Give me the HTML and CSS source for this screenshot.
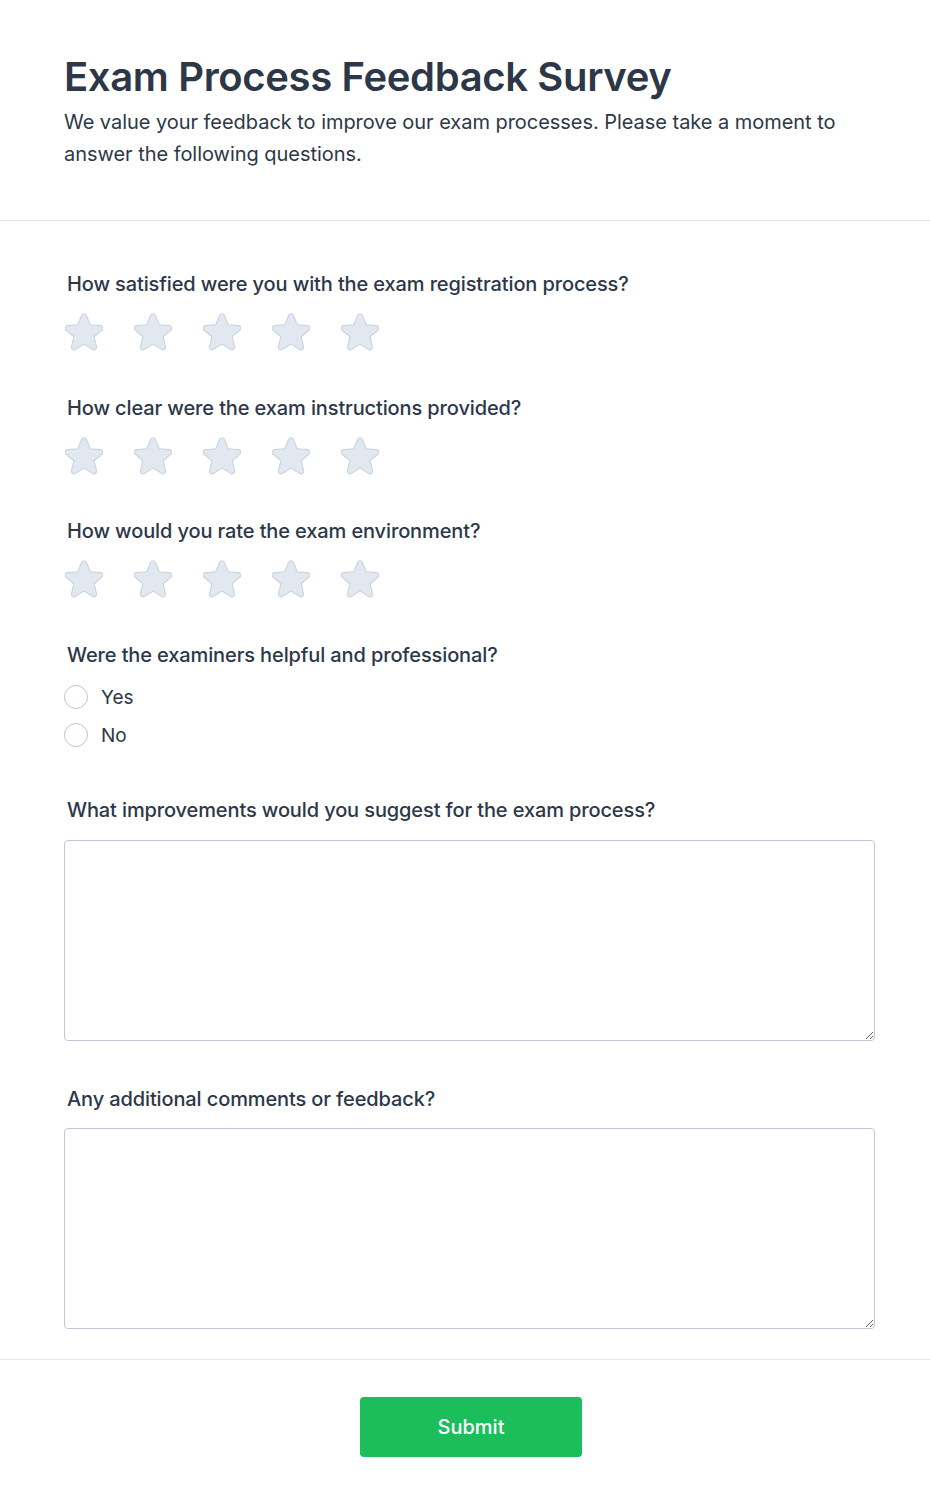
FILE: index.html
```html
<!DOCTYPE html>
<html lang="en">
<head>
<meta charset="utf-8">
<title>Exam Process Feedback Survey</title>
<link rel="stylesheet" href="styles.css">
</head>
<body>
<header class="header">
  <h1 class="title">Exam Process Feedback Survey</h1>
  <p class="intro">We value your feedback to improve our exam processes. Please take a moment to answer the following questions.</p>
</header>
<form class="form">
  <div class="question">
    <label class="label">How satisfied were you with the exam registration process?</label>
    <div class="stars">
      <svg class="star" viewBox="2 2 20 20"><path d="M10.788 3.21c.448-1.077 1.976-1.077 2.424 0l2.082 5.006 5.404.434c1.164.093 1.636 1.545.749 2.305l-4.117 3.527 1.257 5.273c.271 1.136-.964 2.033-1.96 1.425L12 18.354 7.373 21.18c-.996.608-2.231-.29-1.96-1.425l1.257-5.273-4.117-3.527c-.887-.76-.415-2.212.749-2.305l5.404-.434 2.082-5.005Z"/></svg>
      <svg class="star" viewBox="2 2 20 20"><path d="M10.788 3.21c.448-1.077 1.976-1.077 2.424 0l2.082 5.006 5.404.434c1.164.093 1.636 1.545.749 2.305l-4.117 3.527 1.257 5.273c.271 1.136-.964 2.033-1.96 1.425L12 18.354 7.373 21.18c-.996.608-2.231-.29-1.96-1.425l1.257-5.273-4.117-3.527c-.887-.76-.415-2.212.749-2.305l5.404-.434 2.082-5.005Z"/></svg>
      <svg class="star" viewBox="2 2 20 20"><path d="M10.788 3.21c.448-1.077 1.976-1.077 2.424 0l2.082 5.006 5.404.434c1.164.093 1.636 1.545.749 2.305l-4.117 3.527 1.257 5.273c.271 1.136-.964 2.033-1.96 1.425L12 18.354 7.373 21.18c-.996.608-2.231-.29-1.96-1.425l1.257-5.273-4.117-3.527c-.887-.76-.415-2.212.749-2.305l5.404-.434 2.082-5.005Z"/></svg>
      <svg class="star" viewBox="2 2 20 20"><path d="M10.788 3.21c.448-1.077 1.976-1.077 2.424 0l2.082 5.006 5.404.434c1.164.093 1.636 1.545.749 2.305l-4.117 3.527 1.257 5.273c.271 1.136-.964 2.033-1.96 1.425L12 18.354 7.373 21.18c-.996.608-2.231-.29-1.96-1.425l1.257-5.273-4.117-3.527c-.887-.76-.415-2.212.749-2.305l5.404-.434 2.082-5.005Z"/></svg>
      <svg class="star" viewBox="2 2 20 20"><path d="M10.788 3.21c.448-1.077 1.976-1.077 2.424 0l2.082 5.006 5.404.434c1.164.093 1.636 1.545.749 2.305l-4.117 3.527 1.257 5.273c.271 1.136-.964 2.033-1.96 1.425L12 18.354 7.373 21.18c-.996.608-2.231-.29-1.96-1.425l1.257-5.273-4.117-3.527c-.887-.76-.415-2.212.749-2.305l5.404-.434 2.082-5.005Z"/></svg>
    </div>
  </div>
  <div class="question">
    <label class="label">How clear were the exam instructions provided?</label>
    <div class="stars">
      <svg class="star" viewBox="2 2 20 20"><path d="M10.788 3.21c.448-1.077 1.976-1.077 2.424 0l2.082 5.006 5.404.434c1.164.093 1.636 1.545.749 2.305l-4.117 3.527 1.257 5.273c.271 1.136-.964 2.033-1.96 1.425L12 18.354 7.373 21.18c-.996.608-2.231-.29-1.96-1.425l1.257-5.273-4.117-3.527c-.887-.76-.415-2.212.749-2.305l5.404-.434 2.082-5.005Z"/></svg>
      <svg class="star" viewBox="2 2 20 20"><path d="M10.788 3.21c.448-1.077 1.976-1.077 2.424 0l2.082 5.006 5.404.434c1.164.093 1.636 1.545.749 2.305l-4.117 3.527 1.257 5.273c.271 1.136-.964 2.033-1.96 1.425L12 18.354 7.373 21.18c-.996.608-2.231-.29-1.96-1.425l1.257-5.273-4.117-3.527c-.887-.76-.415-2.212.749-2.305l5.404-.434 2.082-5.005Z"/></svg>
      <svg class="star" viewBox="2 2 20 20"><path d="M10.788 3.21c.448-1.077 1.976-1.077 2.424 0l2.082 5.006 5.404.434c1.164.093 1.636 1.545.749 2.305l-4.117 3.527 1.257 5.273c.271 1.136-.964 2.033-1.96 1.425L12 18.354 7.373 21.18c-.996.608-2.231-.29-1.96-1.425l1.257-5.273-4.117-3.527c-.887-.76-.415-2.212.749-2.305l5.404-.434 2.082-5.005Z"/></svg>
      <svg class="star" viewBox="2 2 20 20"><path d="M10.788 3.21c.448-1.077 1.976-1.077 2.424 0l2.082 5.006 5.404.434c1.164.093 1.636 1.545.749 2.305l-4.117 3.527 1.257 5.273c.271 1.136-.964 2.033-1.96 1.425L12 18.354 7.373 21.18c-.996.608-2.231-.29-1.96-1.425l1.257-5.273-4.117-3.527c-.887-.76-.415-2.212.749-2.305l5.404-.434 2.082-5.005Z"/></svg>
      <svg class="star" viewBox="2 2 20 20"><path d="M10.788 3.21c.448-1.077 1.976-1.077 2.424 0l2.082 5.006 5.404.434c1.164.093 1.636 1.545.749 2.305l-4.117 3.527 1.257 5.273c.271 1.136-.964 2.033-1.96 1.425L12 18.354 7.373 21.18c-.996.608-2.231-.29-1.96-1.425l1.257-5.273-4.117-3.527c-.887-.76-.415-2.212.749-2.305l5.404-.434 2.082-5.005Z"/></svg>
    </div>
  </div>
  <div class="question">
    <label class="label">How would you rate the exam environment?</label>
    <div class="stars">
      <svg class="star" viewBox="2 2 20 20"><path d="M10.788 3.21c.448-1.077 1.976-1.077 2.424 0l2.082 5.006 5.404.434c1.164.093 1.636 1.545.749 2.305l-4.117 3.527 1.257 5.273c.271 1.136-.964 2.033-1.960 1.425L12 18.354 7.373 21.18c-.996.608-2.231-.29-1.96-1.425l1.257-5.273-4.117-3.527c-.887-.76-.415-2.212.749-2.305l5.404-.434 2.082-5.005Z"/></svg>
      <svg class="star" viewBox="2 2 20 20"><path d="M10.788 3.21c.448-1.077 1.976-1.077 2.424 0l2.082 5.006 5.404.434c1.164.093 1.636 1.545.749 2.305l-4.117 3.527 1.257 5.273c.271 1.136-.964 2.033-1.96 1.425L12 18.354 7.373 21.18c-.996.608-2.231-.29-1.96-1.425l1.257-5.273-4.117-3.527c-.887-.76-.415-2.212.749-2.305l5.404-.434 2.082-5.005Z"/></svg>
      <svg class="star" viewBox="2 2 20 20"><path d="M10.788 3.21c.448-1.077 1.976-1.077 2.424 0l2.082 5.006 5.404.434c1.164.093 1.636 1.545.749 2.305l-4.117 3.527 1.257 5.273c.271 1.136-.964 2.033-1.96 1.425L12 18.354 7.373 21.18c-.996.608-2.231-.29-1.96-1.425l1.257-5.273-4.117-3.527c-.887-.76-.415-2.212.749-2.305l5.404-.434 2.082-5.005Z"/></svg>
      <svg class="star" viewBox="2 2 20 20"><path d="M10.788 3.21c.448-1.077 1.976-1.077 2.424 0l2.082 5.006 5.404.434c1.164.093 1.636 1.545.749 2.305l-4.117 3.527 1.257 5.273c.271 1.136-.964 2.033-1.96 1.425L12 18.354 7.373 21.18c-.996.608-2.231-.29-1.96-1.425l1.257-5.273-4.117-3.527c-.887-.76-.415-2.212.749-2.305l5.404-.434 2.082-5.005Z"/></svg>
      <svg class="star" viewBox="2 2 20 20"><path d="M10.788 3.21c.448-1.077 1.976-1.077 2.424 0l2.082 5.006 5.404.434c1.164.093 1.636 1.545.749 2.305l-4.117 3.527 1.257 5.273c.271 1.136-.964 2.033-1.96 1.425L12 18.354 7.373 21.18c-.996.608-2.231-.29-1.96-1.425l1.257-5.273-4.117-3.527c-.887-.76-.415-2.212.749-2.305l5.404-.434 2.082-5.005Z"/></svg>
    </div>
  </div>
  <div class="question">
    <label class="label">Were the examiners helpful and professional?</label>
    <div class="radios">
      <label class="radio-row"><span class="radio"></span><span>Yes</span></label>
      <label class="radio-row"><span class="radio"></span><span>No</span></label>
    </div>
  </div>
  <div class="question question-text">
    <label class="label">What improvements would you suggest for the exam process?</label>
    <textarea class="textarea"></textarea>
  </div>
  <div class="question question-text">
    <label class="label">Any additional comments or feedback?</label>
    <textarea class="textarea"></textarea>
  </div>
</form>
<footer class="footer">
  <button class="submit" type="button">Submit</button>
</footer>
</body>
</html>
```
FILE: styles.css
```css
* { box-sizing: border-box; }
html, body { margin: 0; padding: 0; background: #ffffff; }
body {
  font-family: Inter, "Noto Sans", sans-serif;
  color: #2d3748;
  width: 930px;
}
.header {
  padding: 53px 64px 50px 64px;
  border-bottom: 1px solid #e2e2ec;
}
.title {
  margin: 0;
  font-size: 40px;
  line-height: 48px;
  font-weight: 600;
  color: #2d3748;
  letter-spacing: -0.35px;
}
.intro {
  margin: 5px 0 0 0;
  font-size: 20px;
  line-height: 32px;
  color: #2d3748;
  letter-spacing: -0.04px;
  max-width: 790px;
}
.form {
  padding: 49px 55px 30px 64px;
  border-bottom: 1px solid #e8e8f0;
  display: flex;
  flex-direction: column;
  gap: 42.7px;
}
.question {
  display: flex;
  flex-direction: column;
  gap: 15px;
}
.label {
  display: block;
  padding-left: 3px;
  font-size: 20px;
  line-height: 28px;
  font-weight: 500;
  letter-spacing: -0.12px;
  color: #2d3748;
}
.stars {
  display: flex;
  gap: 31px;
  height: 38px;
  padding-left: 1px;
}
.star {
  width: 38px;
  height: 38px;
  fill: #e2e8f0;
  stroke: #cdd4e0;
  stroke-width: 0.6;
}
.radios {
  display: flex;
  flex-direction: column;
  gap: 14px;
  padding-top: 1px;
  padding-bottom: 6px;
}
.radio-row {
  display: flex;
  align-items: center;
  gap: 13px;
  height: 24px;
  font-size: 19px;
  color: #2d3748;
}
.radio {
  width: 24px;
  height: 24px;
  border: 1px solid #c0c4d0;
  border-radius: 50%;
  background: #fff;
}
.question-text { gap: 16px; }
.question-text + .question-text { margin-top: 2px; gap: 15px; }
.textarea {
  display: block;
  width: 811px;
  height: 201px;
  border: 1px solid #c3c5d8;
  border-radius: 4px;
  resize: vertical;
  font-family: inherit;
  margin: 0;
  padding: 8px;
}
.footer {
  padding: 37px 52px 49px 64px;
  display: flex;
  justify-content: center;
}
.submit {
  width: 222px;
  height: 60px;
  background: #1cbe5c;
  color: #ffffff;
  border: none;
  border-radius: 4px;
  font-family: Inter, "Noto Sans", sans-serif;
  font-size: 20px;
  font-weight: 500;
}
```
